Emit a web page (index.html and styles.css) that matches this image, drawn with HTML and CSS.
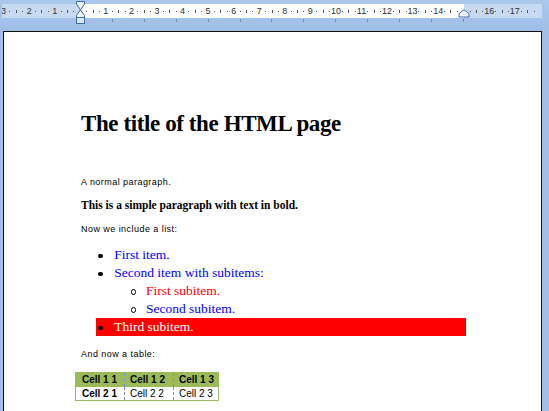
FILE: index.html
```html
<!DOCTYPE html>
<html lang="en">
<head>
<meta charset="utf-8">
<title>The title of the HTML page</title>
<link rel="stylesheet" href="styles.css">
</head>
<body>
<div class="topbar">
  <div class="ruler">
    <div class="scale">
      <b>3</b><i class="d"></i><i class="t"></i><i class="d"></i>
      <b>2</b><i class="d"></i><i class="t"></i><i class="d"></i>
      <b>1</b><i class="d"></i><i class="t"></i><i class="d"></i>
      <b></b><i class="d"></i><i class="t"></i><i class="d"></i>
      <b>1</b><i class="d"></i><i class="t"></i><i class="d"></i>
      <b>2</b><i class="d"></i><i class="t"></i><i class="d"></i>
      <b>3</b><i class="d"></i><i class="t"></i><i class="d"></i>
      <b>4</b><i class="d"></i><i class="t"></i><i class="d"></i>
      <b>5</b><i class="d"></i><i class="t"></i><i class="d"></i>
      <b>6</b><i class="d"></i><i class="t"></i><i class="d"></i>
      <b>7</b><i class="d"></i><i class="t"></i><i class="d"></i>
      <b>8</b><i class="d"></i><i class="t"></i><i class="d"></i>
      <b>9</b><i class="d"></i><i class="t"></i><i class="d"></i>
      <b>10</b><i class="d"></i><i class="t"></i><i class="d"></i>
      <b>11</b><i class="d"></i><i class="t"></i><i class="d"></i>
      <b>12</b><i class="d"></i><i class="t"></i><i class="d"></i>
      <b>13</b><i class="d"></i><i class="t"></i><i class="d"></i>
      <b>14</b><i class="d"></i><i class="t"></i><i class="d"></i>
      <b></b><i class="d"></i><i class="t"></i><i class="d"></i>
      <b>16</b><i class="d"></i><i class="t"></i><i class="d"></i>
      <b>17</b><i class="d"></i><i class="t"></i><i class="d"></i>
      <b></b>
    </div>
  </div>
  <div class="tabs">
    <i></i><i></i><i></i><i></i><i></i><i></i><i></i><i></i><i></i><i></i><i></i><i></i>
  </div>
  <svg class="indent-left" width="11" height="23" viewBox="0 0 11 23">
    <path d="M1.5 0.5 H9.5 V3 L5.5 8.8 L1.5 3 Z" fill="#f3f7fd" stroke="#3d69ad"/>
    <path d="M5.5 8.8 L9.5 14.5 V16.5 H1.5 V14.5 Z" fill="#f3f7fd" stroke="#3d69ad"/>
    <rect x="1.5" y="16.5" width="8" height="6" fill="#dbe6f6" stroke="#3d69ad"/>
  </svg>
  <svg class="indent-right" width="12" height="9" viewBox="0 0 12 9">
    <path d="M1 8 V4.5 L6 0.8 L11 4.5 V8 Z" fill="#f3f7fd" stroke="#3d69ad"/>
  </svg>
</div>

<div class="page">
  <h1 class="title">The title of the HTML page</h1>
  <p class="normal first">A normal paragraph.</p>
  <p class="bold">This is a simple paragraph with text in bold.</p>
  <p class="normal intro">Now we include a list:</p>
  <ul class="list">
    <li class="blue"><div class="row"><span class="bullet"></span>First item.</div></li>
    <li class="blue"><div class="row"><span class="bullet"></span>Second item with subitems:</div>
      <ul class="sublist">
        <li class="red"><div class="row"><span class="circle"></span>First subitem.</div></li>
        <li class="blue"><div class="row"><span class="circle"></span>Second subitem.</div></li>
      </ul>
    </li>
    <li class="highlight"><div class="row"><span class="bullet"></span>Third subitem.</div></li>
  </ul>
  <p class="normal intro">And now a table:</p>
  <table class="grid">
    <tr class="head"><th class="c1">Cell 1 1</th><th class="c2">Cell 1 2</th><th class="c3">Cell 1 3</th></tr>
    <tr class="body"><td class="c1 strong">Cell 2 1</td><td class="c2">Cell 2 2</td><td class="c3">Cell 2 3</td></tr>
  </table>
</div>
</body>
</html>
```

FILE: styles.css
```css
html, body {
  margin: 0;
  padding: 0;
}
body {
  width: 549px;
  height: 411px;
  overflow: hidden;
  background: #a2bee6;
}

.topbar {
  position: relative;
  height: 31px;
  box-sizing: border-box;
  padding: 4px 0 0 2px;
  background: linear-gradient(#abc7ed, #a0bde6);
}

.ruler {
  width: 540px;
  height: 14px;
  overflow: hidden;
  display: flex;
  align-items: center;
  background: linear-gradient(to right, #c8daf1 78px, #ffffff 78px, #ffffff 462px, #c8daf1 462px);
}
.scale {
  display: flex;
  flex: none;
  margin-left: -1.6px;
}
.scale > * {
  flex: none;
  width: 6.4px;
  height: 14px;
  display: flex;
  justify-content: center;
  align-items: center;
  font: 9px/14px "Liberation Sans", Arial, sans-serif;
  color: #333333;
  font-style: normal;
  font-weight: normal;
}
.scale .d::after {
  content: "";
  width: 1px;
  height: 1px;
  background: #555555;
}
.scale .t::after {
  content: "";
  width: 1px;
  height: 3px;
  background: #555555;
}

.tabs {
  display: flex;
  gap: 30.9px;
  margin: 1px 0 0 110px;
  height: 3px;
}
.tabs i {
  flex: none;
  width: 1px;
  height: 3px;
  background: #7b8ba5;
}

.indent-left {
  position: absolute;
  left: 75px;
  top: 1px;
}
.indent-right {
  position: absolute;
  left: 458px;
  top: 9px;
}

.page {
  margin-left: 3px;
  width: 539px;
  height: 390px;
  box-sizing: border-box;
  background: #ffffff;
  border: 1px solid #111111;
  border-bottom: none;
  padding: 78px 0 0 77px;
}

.title {
  margin: 0;
  font: bold 23px/28px "Liberation Serif", "Times New Roman", serif;
  letter-spacing: -0.4px;
  color: #000;
}

.normal {
  margin: 0;
  font: 9px/12px "Liberation Sans", Arial, sans-serif;
  letter-spacing: 0.45px;
  color: #000;
}
.normal.first {
  margin-top: 38px;
}
.normal.intro {
  margin-top: 11.5px;
}

.bold {
  margin: 9.5px 0 0;
  font: bold 11.5px/14px "Liberation Serif", "Times New Roman", serif;
  color: #000;
}

.list {
  list-style: none;
  margin: 11px 0 0 15px;
  padding: 0;
  width: 370px;
}
.sublist {
  list-style: none;
  margin: 0;
  padding: 0 0 0 32.4px;
}
.row {
  display: flex;
  align-items: center;
  height: 18px;
  font: 13.5px/18px "Liberation Serif", "Times New Roman", serif;
  white-space: nowrap;
}
.blue > .row { color: #0000ff; }
.red > .row { color: #ff0000; }
.highlight > .row {
  background: #ff0000;
  color: #ffffff;
}

.bullet {
  flex: none;
  width: 4.5px;
  height: 4.5px;
  border-radius: 50%;
  background: #000;
  margin: 2px 11.5px 0 2.2px;
}
.circle {
  flex: none;
  width: 3.5px;
  height: 3.5px;
  border: 1px solid #000;
  border-radius: 50%;
  margin: 2px 9.8px 0 2.3px;
}

.grid {
  margin: 12.5px 0 0 -6px;
  border-collapse: collapse;
  border: 1px solid #9bbb59;
}
.grid th, .grid td {
  padding: 0 0 0 5px;
  text-align: left;
  font: 10px/13px "Liberation Sans", Arial, sans-serif;
  color: #000;
  white-space: nowrap;
}
.grid .head th {
  background: #9bbb59;
  font-weight: bold;
  height: 14px;
  line-height: 14px;
}
.grid .body td {
  background: #fff;
  height: 13px;
}
.grid .strong { font-weight: bold; }
.grid .c1 { width: 42px; padding-left: 6px; }
.grid .c2 { width: 43px; border-left: 1px dashed #6f92d4; }
.grid .c3 { width: 39px; border-left: 1px dashed #6f92d4; }
```
